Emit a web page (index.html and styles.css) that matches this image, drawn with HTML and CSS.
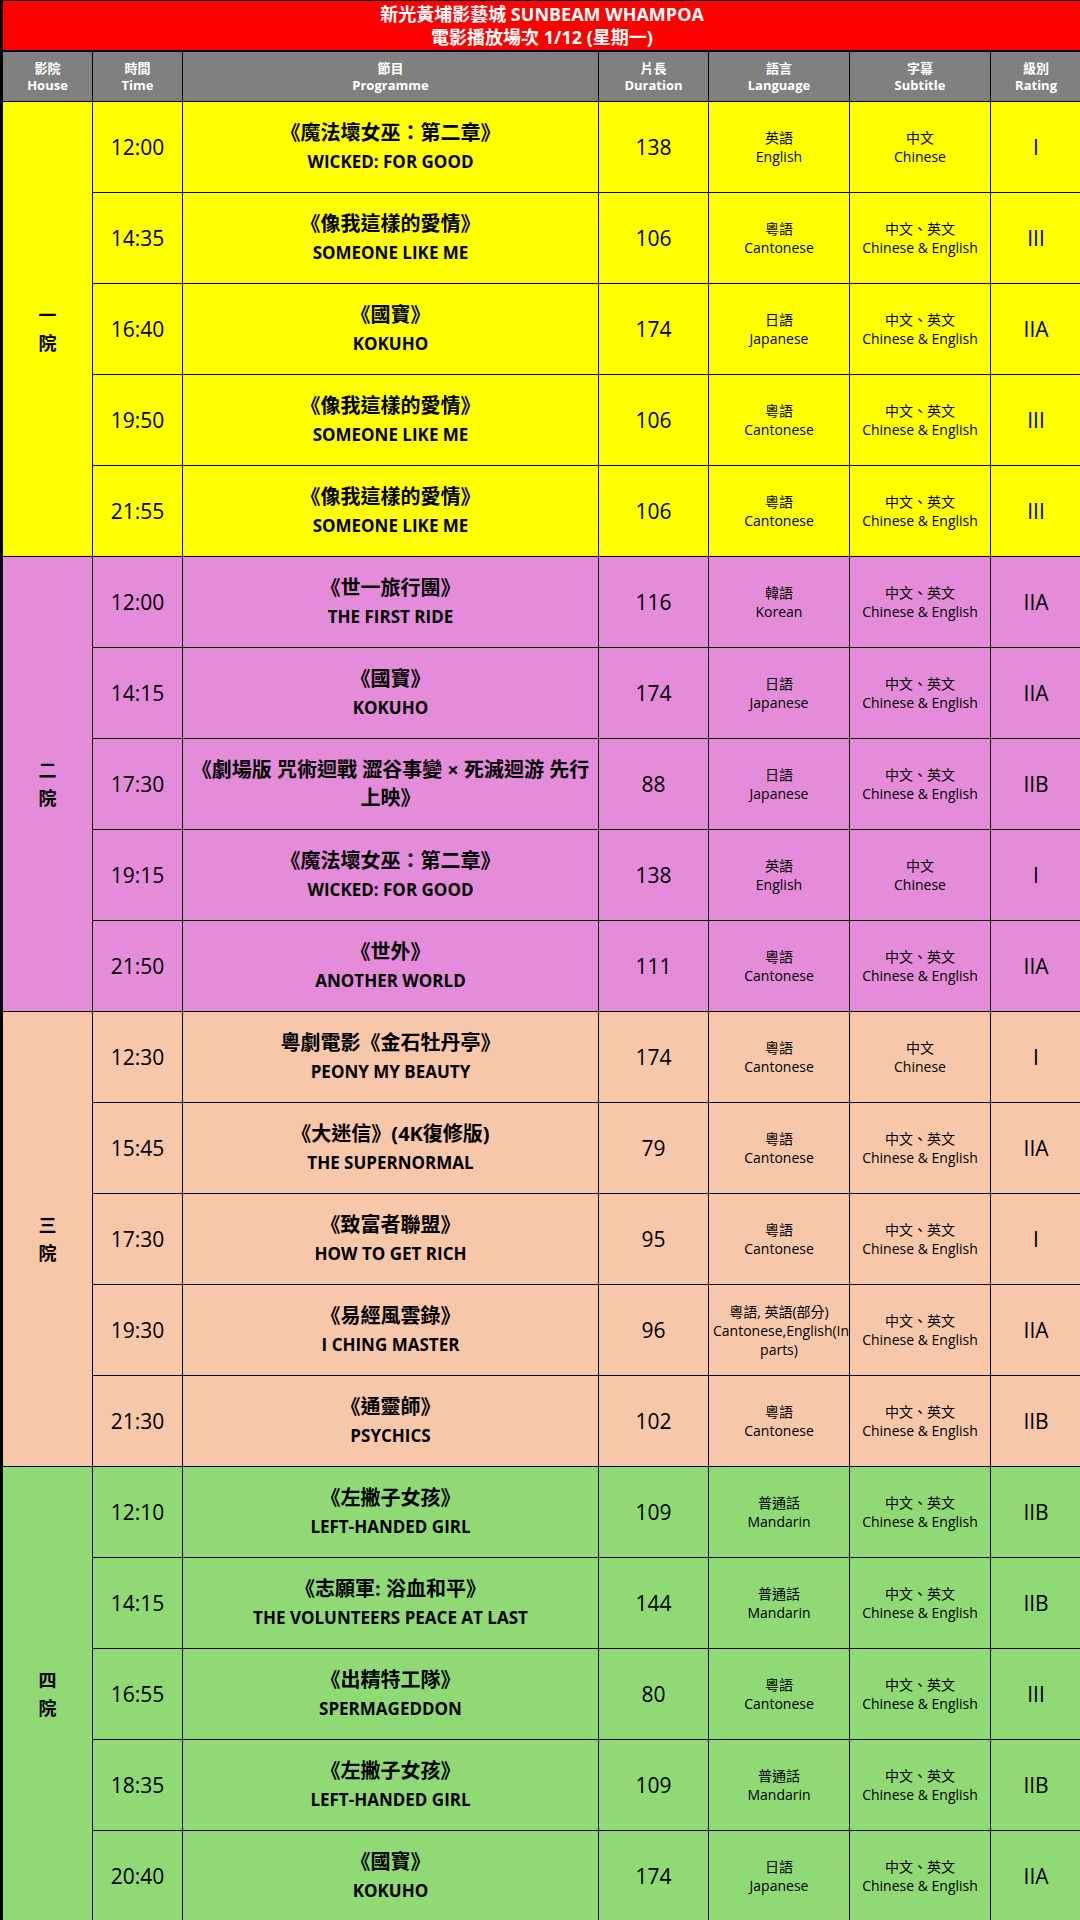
FILE: index.html
```html
<!DOCTYPE html>
<html lang="zh-Hant">
<head>
<meta charset="utf-8">
<title>新光黃埔影藝城 SUNBEAM WHAMPOA</title>
<link rel="stylesheet" href="styles.css">
</head>
<body>
<table class="schedule">
  <colgroup>
    <col class="c-house"><col class="c-time"><col class="c-prog"><col class="c-dur"><col class="c-lang"><col class="c-sub"><col class="c-rate">
  </colgroup>
  <thead>
    <tr class="title-row"><th colspan="7">新光黃埔影藝城 SUNBEAM WHAMPOA<br>電影播放場次 1/12 (星期一)</th></tr>
    <tr class="head-row">
      <th>影院<br>House</th><th>時間<br>Time</th><th>節目<br>Programme</th><th>片長<br>Duration</th><th>語言<br>Language</th><th>字幕<br>Subtitle</th><th>級別<br>Rating</th>
    </tr>
  </thead>
  <tbody class="house-1">
    <tr><td rowspan="5" class="house">一<br>院</td><td class="num">12:00</td><td class="prog">《魔法壞女巫：第二章》<br><span class="en">WICKED: FOR GOOD</span></td><td class="num">138</td><td class="small">英語<br>English</td><td class="small">中文<br>Chinese</td><td class="num">I</td></tr>
    <tr><td class="num">14:35</td><td class="prog">《像我這樣的愛情》<br><span class="en">SOMEONE LIKE ME</span></td><td class="num">106</td><td class="small">粵語<br>Cantonese</td><td class="small">中文、英文<br>Chinese &amp; English</td><td class="num">III</td></tr>
    <tr><td class="num">16:40</td><td class="prog">《國寶》<br><span class="en">KOKUHO</span></td><td class="num">174</td><td class="small">日語<br>Japanese</td><td class="small">中文、英文<br>Chinese &amp; English</td><td class="num">IIA</td></tr>
    <tr><td class="num">19:50</td><td class="prog">《像我這樣的愛情》<br><span class="en">SOMEONE LIKE ME</span></td><td class="num">106</td><td class="small">粵語<br>Cantonese</td><td class="small">中文、英文<br>Chinese &amp; English</td><td class="num">III</td></tr>
    <tr><td class="num">21:55</td><td class="prog">《像我這樣的愛情》<br><span class="en">SOMEONE LIKE ME</span></td><td class="num">106</td><td class="small">粵語<br>Cantonese</td><td class="small">中文、英文<br>Chinese &amp; English</td><td class="num">III</td></tr>
  </tbody>
  <tbody class="house-2">
    <tr><td rowspan="5" class="house">二<br>院</td><td class="num">12:00</td><td class="prog">《世一旅行團》<br><span class="en">THE FIRST RIDE</span></td><td class="num">116</td><td class="small">韓語<br>Korean</td><td class="small">中文、英文<br>Chinese &amp; English</td><td class="num">IIA</td></tr>
    <tr><td class="num">14:15</td><td class="prog">《國寶》<br><span class="en">KOKUHO</span></td><td class="num">174</td><td class="small">日語<br>Japanese</td><td class="small">中文、英文<br>Chinese &amp; English</td><td class="num">IIA</td></tr>
    <tr><td class="num">17:30</td><td class="prog">《劇場版 咒術迴戰 澀谷事變 × 死滅迴游 先行上映》</td><td class="num">88</td><td class="small">日語<br>Japanese</td><td class="small">中文、英文<br>Chinese &amp; English</td><td class="num">IIB</td></tr>
    <tr><td class="num">19:15</td><td class="prog">《魔法壞女巫：第二章》<br><span class="en">WICKED: FOR GOOD</span></td><td class="num">138</td><td class="small">英語<br>English</td><td class="small">中文<br>Chinese</td><td class="num">I</td></tr>
    <tr><td class="num">21:50</td><td class="prog">《世外》<br><span class="en">ANOTHER WORLD</span></td><td class="num">111</td><td class="small">粵語<br>Cantonese</td><td class="small">中文、英文<br>Chinese &amp; English</td><td class="num">IIA</td></tr>
  </tbody>
  <tbody class="house-3">
    <tr><td rowspan="5" class="house">三<br>院</td><td class="num">12:30</td><td class="prog">粵劇電影《金石牡丹亭》<br><span class="en">PEONY MY BEAUTY</span></td><td class="num">174</td><td class="small">粵語<br>Cantonese</td><td class="small">中文<br>Chinese</td><td class="num">I</td></tr>
    <tr><td class="num">15:45</td><td class="prog">《大迷信》(4K復修版)<br><span class="en">THE SUPERNORMAL</span></td><td class="num">79</td><td class="small">粵語<br>Cantonese</td><td class="small">中文、英文<br>Chinese &amp; English</td><td class="num">IIA</td></tr>
    <tr><td class="num">17:30</td><td class="prog">《致富者聯盟》<br><span class="en">HOW TO GET RICH</span></td><td class="num">95</td><td class="small">粵語<br>Cantonese</td><td class="small">中文、英文<br>Chinese &amp; English</td><td class="num">I</td></tr>
    <tr><td class="num">19:30</td><td class="prog">《易經風雲錄》<br><span class="en">I CHING MASTER</span></td><td class="num">96</td><td class="small">粵語, 英語(部分)<br>Cantonese,English(In parts)</td><td class="small">中文、英文<br>Chinese &amp; English</td><td class="num">IIA</td></tr>
    <tr><td class="num">21:30</td><td class="prog">《通靈師》<br><span class="en">PSYCHICS</span></td><td class="num">102</td><td class="small">粵語<br>Cantonese</td><td class="small">中文、英文<br>Chinese &amp; English</td><td class="num">IIB</td></tr>
  </tbody>
  <tbody class="house-4">
    <tr><td rowspan="5" class="house">四<br>院</td><td class="num">12:10</td><td class="prog">《左撇子女孩》<br><span class="en">LEFT-HANDED GIRL</span></td><td class="num">109</td><td class="small">普通話<br>Mandarin</td><td class="small">中文、英文<br>Chinese &amp; English</td><td class="num">IIB</td></tr>
    <tr><td class="num">14:15</td><td class="prog">《志願軍: 浴血和平》<br><span class="en">THE VOLUNTEERS PEACE AT LAST</span></td><td class="num">144</td><td class="small">普通話<br>Mandarin</td><td class="small">中文、英文<br>Chinese &amp; English</td><td class="num">IIB</td></tr>
    <tr><td class="num">16:55</td><td class="prog">《出精特工隊》<br><span class="en">SPERMAGEDDON</span></td><td class="num">80</td><td class="small">粵語<br>Cantonese</td><td class="small">中文、英文<br>Chinese &amp; English</td><td class="num">III</td></tr>
    <tr><td class="num">18:35</td><td class="prog">《左撇子女孩》<br><span class="en">LEFT-HANDED GIRL</span></td><td class="num">109</td><td class="small">普通話<br>Mandarin</td><td class="small">中文、英文<br>Chinese &amp; English</td><td class="num">IIB</td></tr>
    <tr><td class="num">20:40</td><td class="prog">《國寶》<br><span class="en">KOKUHO</span></td><td class="num">174</td><td class="small">日語<br>Japanese</td><td class="small">中文、英文<br>Chinese &amp; English</td><td class="num">IIA</td></tr>
  </tbody>
</table>
</body>
</html>
```

FILE: styles.css
```css
html {
  overflow: hidden;
}

body {
  margin: 0;
  background: #ffffff;
  font-family: "Open Sans", "Noto Sans CJK TC", sans-serif;
  color: #000;
}

.schedule {
  width: 1080px;
  border-collapse: collapse;
  table-layout: fixed;
  border-left: 3px solid #000;
  border-top: 1px solid #000;
}

.c-house { width: 91px; }
.c-time { width: 90px; }
.c-prog { width: 416px; }
.c-dur { width: 110px; }
.c-lang { width: 141px; }
.c-sub { width: 141px; }
.c-rate { width: 91px; }

.schedule th,
.schedule td {
  border: 1px solid #000;
  padding: 0 4px;
  text-align: center;
  vertical-align: middle;
  overflow: hidden;
}

.title-row th {
  background: #ff0000;
  color: #fff;
  font-size: 18px;
  font-weight: 700;
  line-height: 23px;
  height: 49px;
  padding: 0;
  border-bottom: 2px solid #000;
}

.head-row th {
  background: #808080;
  color: #fff;
  font-size: 13px;
  font-weight: 700;
  line-height: 17px;
  height: 49px;
}

.schedule td {
  height: 90px;
}

.house-1 td { background: #ffff00; }
.house-2 td { background: #e48bda; }
.house-3 td { background: #f7c7aa; }
.house-4 td { background: #8fda75; }

.house {
  font-size: 18px;
  font-weight: 700;
  line-height: 28px;
}

.num {
  font-size: 21px;
  font-weight: 400;
}

.prog {
  font-size: 20px;
  font-weight: 700;
  line-height: 28px;
  padding-top: 3px;
}

.prog .en {
  font-size: 17px;
}

.small {
  font-size: 14px;
  line-height: 19px;
}
```
